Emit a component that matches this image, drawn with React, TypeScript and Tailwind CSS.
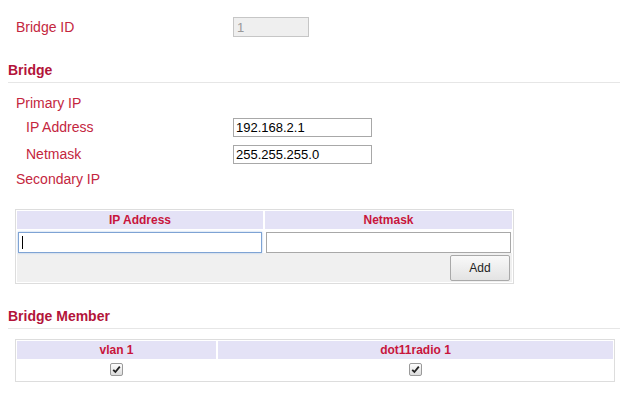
import React from 'react';

const font = { fontFamily: '"Liberation Sans", Arial, sans-serif' };

function Check() {
  return (
    <span className="inline-flex h-[13px] w-[13px] items-center justify-center rounded-[2px] border border-[#9a9a9a] bg-gradient-to-b from-[#fdfdfd] to-[#dcdcdc]">
      <svg width="9" height="9" viewBox="0 0 9 9">
        <path d="M1.2 4.8 L3.4 7 L7.8 1.6" fill="none" stroke="#222" strokeWidth="1.8" />
      </svg>
    </span>
  );
}

function Field({ label, value }: { label: string; value: string }) {
  return (
    <div className="flex items-center h-[27px]">
      <span className="w-[225px] pl-[18px] text-[14px] text-[#c4263e]">{label}</span>
      <input
        defaultValue={value}
        className="h-[19px] w-[139px] border border-[#a8a8a8] bg-white px-[2px] text-[13px] text-black outline-none"
      />
    </div>
  );
}

export default function App() {
  return (
    <div className="min-h-[396px] w-[620px] bg-white pl-[8px] pt-[17px]" style={font}>
      {/* Bridge ID */}
      <div className="flex items-center h-[20px]">
        <span className="w-[225px] pl-[8px] text-[14px] text-[#c4263e]">Bridge ID</span>
        <input
          disabled
          defaultValue="1"
          className="h-[20px] w-[76px] border border-[#c6c6c6] bg-[#efefef] px-[3px] text-[13px] text-[#999]"
        />
      </div>

      {/* Bridge heading */}
      <div className="mt-[25px] border-b border-[#e6e6e6] pb-[4px] text-[14px] leading-[16px] font-bold text-[#b3143a]">
        Bridge
      </div>

      <div className="mt-[10px] h-[20px] pl-[8px] text-[14px] leading-[20px] text-[#c4263e]">Primary IP</div>
      <div className="h-[1px]" />
      <Field label="IP Address" value="192.168.2.1" />
      <Field label="Netmask" value="255.255.255.0" />
      <div className="h-[22px] pl-[8px] text-[14px] leading-[22px] text-[#c4263e]">Secondary IP</div>

      {/* Secondary IP table */}
      <div className="ml-[7px] mt-[19px] w-[499px] border border-[#dddddd] p-[1px]">
        <div className="grid grid-cols-[246px_1fr] gap-[2px]">
          <div className="h-[18px] bg-[#e4e2f6] text-center text-[12px] leading-[18px] font-bold text-[#c8153c]">IP Address</div>
          <div className="h-[18px] bg-[#e4e2f6] text-center text-[12px] leading-[18px] font-bold text-[#c8153c]">Netmask</div>
        </div>
        <div className="grid grid-cols-[246px_1fr] gap-[2px] pt-[3px]">
          <div className="relative px-[1px]">
            <input className="block h-[21px] w-full border border-[#7ea3d4] bg-white px-[3px] text-[13px] outline-none shadow-[0_0_2px_#a9c3e6]" />
            <span className="absolute left-[5px] top-[4px] h-[13px] w-[1px] bg-black" />
          </div>
          <div className="px-[1px]">
            <input className="block h-[21px] w-full border border-[#a8a8a8] bg-white px-[3px] text-[13px] outline-none" />
          </div>
        </div>
        <div className="flex h-[29px] items-center justify-end bg-[#f0f0f0] pr-[2px]">
          <button className="h-[26px] w-[60px] rounded-[2px] border border-[#a9a9a9] bg-gradient-to-b from-[#f9f9f9] to-[#e3e3e3] text-[12px] text-[#222]">
            Add
          </button>
        </div>
      </div>

      {/* Bridge Member heading */}
      <div className="mt-[24px] border-b border-[#e6e6e6] pb-[4px] text-[14px] leading-[16px] font-bold text-[#b3143a]">
        Bridge Member
      </div>

      <div className="ml-[7px] mt-[10px] w-[600px] border border-[#dddddd] p-[1px]">
        <div className="grid grid-cols-[199px_1fr] gap-[2px]">
          <div className="h-[18px] bg-[#e4e2f6] text-center text-[12px] leading-[18px] font-bold text-[#c8153c]">vlan 1</div>
          <div className="h-[18px] bg-[#e4e2f6] text-center text-[12px] leading-[18px] font-bold text-[#c8153c]">dot11radio 1</div>
        </div>
        <div className="grid grid-cols-[199px_1fr] gap-[2px] h-[21px] items-center">
          <div className="flex justify-center"><Check /></div>
          <div className="flex justify-center"><Check /></div>
        </div>
      </div>
    </div>
  );
}
